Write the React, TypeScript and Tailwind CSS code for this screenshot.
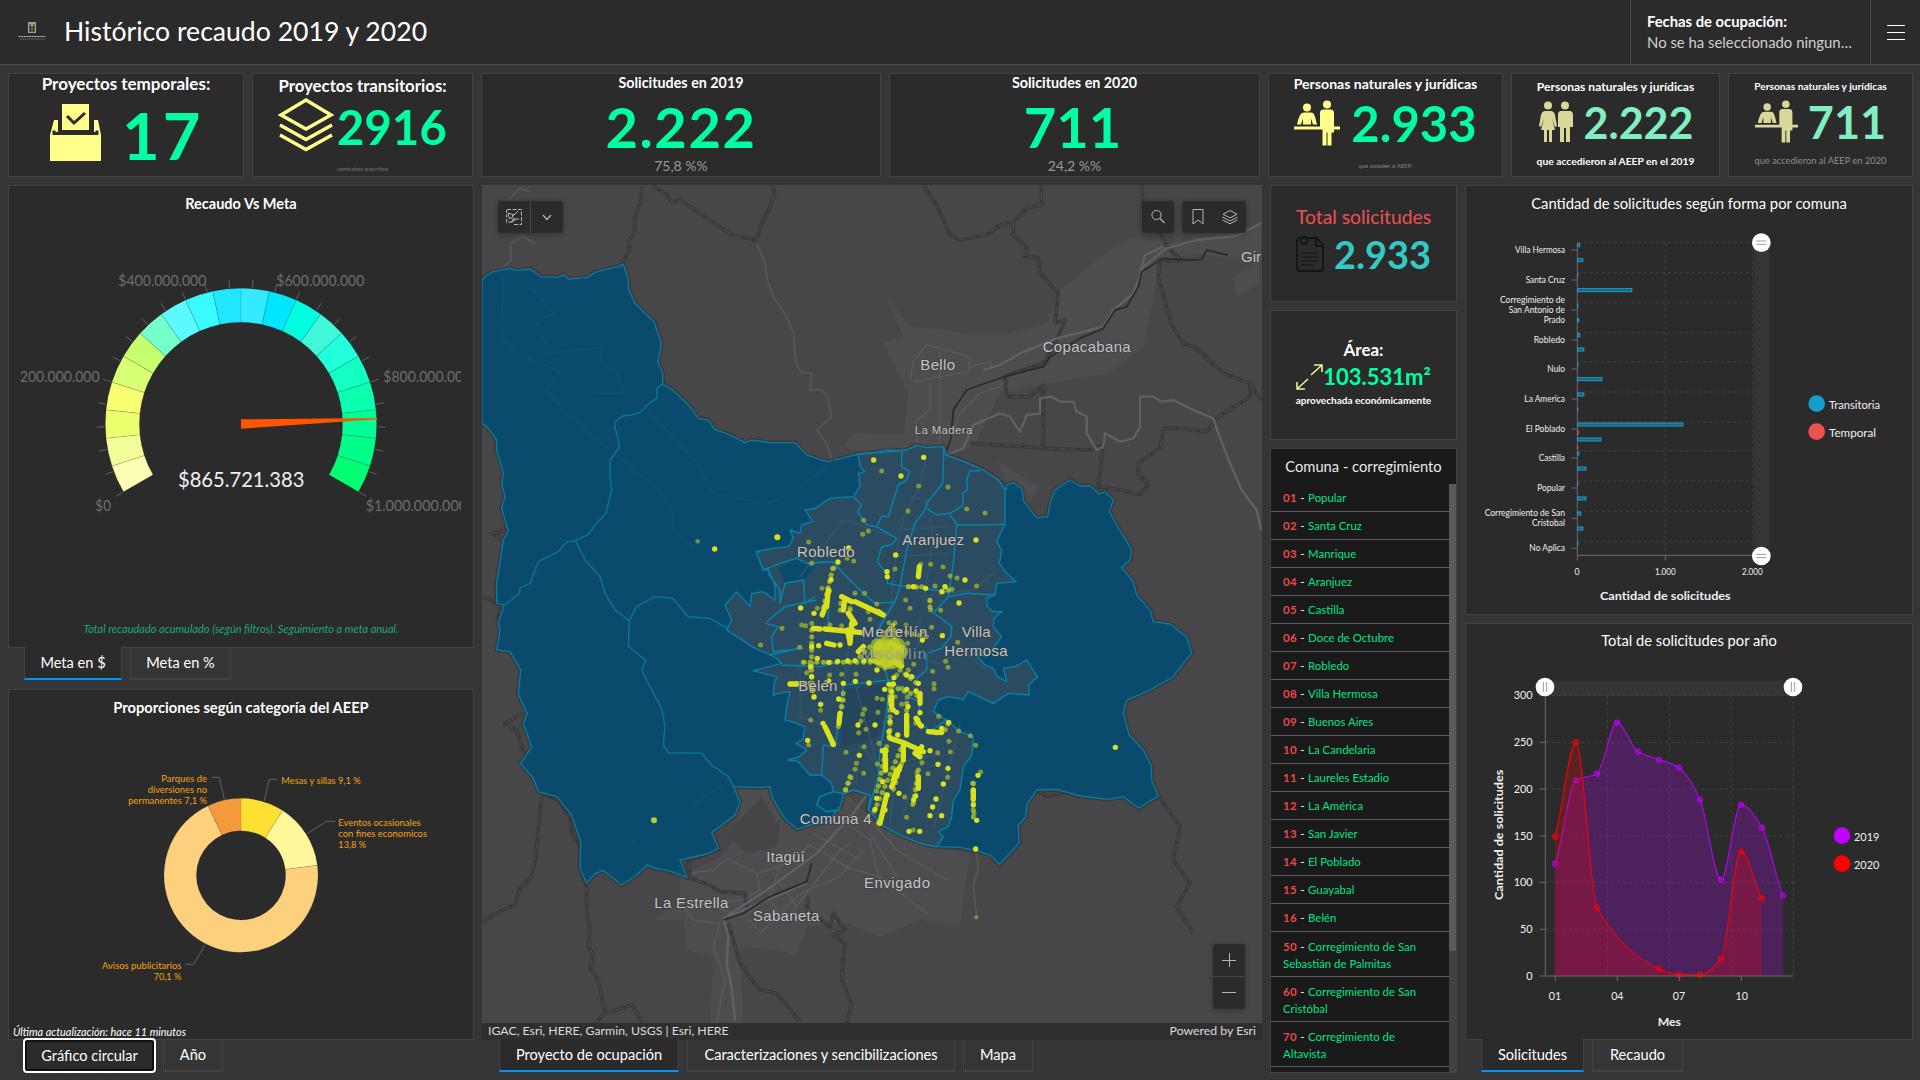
import React from "react";

const FONT = 'Lato, "Liberation Sans", sans-serif';

type TProps = {
  x: number;
  y: number;
  s: number;
  w?: number;
  a?: "start" | "middle" | "end";
  fill?: string;
  bold?: boolean;
  children: string;
};

function T({ x, y, s, w, a = "start", fill = "#f0f0f0", bold, children }: TProps) {
  return (
    <text
      x={x}
      y={y}
      fontSize={s}
      textAnchor={a}
      fill={fill}
      fontWeight={bold ? 700 : 400}
      textLength={w}
      lengthAdjust={w ? "spacingAndGlyphs" : undefined}
    >
      {children}
    </text>
  );
}

function Panel({ className = "", children }: { className?: string; children?: React.ReactNode }) {
  return (
    <section className={"shrink-0 overflow-hidden border border-[#424242] bg-[#2b2b2b] " + className}>{children}</section>
  );
}

function Tab({ label, width, active, focus }: { label: string; width: string; active?: boolean; focus?: boolean }) {
  const state = focus
    ? "z-10 -mt-[2px] h-[35px] rounded border-2 border-white bg-[#2b2b2b] shadow-[inset_0_0_0_2px_#101010]"
    : active
      ? "-mt-px h-[33px] border-x border-b-2 border-x-[#424242] border-b-[#0095ff] bg-[#2b2b2b]"
      : "h-8 border-x border-b-2 border-[#424242] bg-[#353535]";
  return (
    <button className={"relative flex shrink-0 items-center justify-center whitespace-nowrap text-[14.600px] text-white " + width + " " + state}>
      {label}
    </button>
  );
}

/* ---------- indicator icons ---------- */

function BallotIcon() {
  return (
    <svg className="h-[60px] w-[52px]" viewBox="0 0 52 60">
      <path fill="#ffff8a" d="M0 32l4-15h4v14h36V17h4l3 15v26H0z" />
      <path fill="none" stroke="#2b2b2b" strokeWidth="3" d="M4 27.500v3h43v-3" />
      <path fill="none" stroke="#2b2b2b" strokeWidth="1.500" d="M11 14v14M40 14v14" />
      <path fill="#ffff8a" d="M12 1h27v26H12z" />
      <path fill="none" stroke="#2b2b2b" strokeWidth="3" d="M17 13l7 7 11-10" />
    </svg>
  );
}

function LayersIcon() {
  return (
    <svg className="h-[54px] w-[56px]" viewBox="0 0 56 54" fill="none" stroke="#ffff8a" strokeWidth="3.400">
      <path d="M28 2l25 15-25 14L3 17z" />
      <path d="M2 27l26 14.500L54 27" />
      <path d="M2 37l26 14.500L54 37" />
    </svg>
  );
}

function DeskPeople({ fill, className }: { fill: string; className: string }) {
  return (
    <svg className={className} viewBox="0 0 46 46" fill={fill}>
      <circle cx="13" cy="7" r="4" />
      <circle cx="33" cy="4" r="4" />
      <path d="M10 12h7c3 0 4 3 6 12h-4l-2-6v6H9v-6l-2 6H3c2-9 4-12 7-12z" />
      <path d="M0 26h26V13c0-3 1-4 4-4h6c3 0 4 1 4 4v13h6v3h-6v3h-2.500v13h-4V32h-1v13h-4V29H0z" />
    </svg>
  );
}

function Couple({ fill }: { fill: string }) {
  return (
    <svg className="h-[42px] w-[35px]" viewBox="0 0 35 42" fill={fill}>
      <circle cx="10" cy="4.500" r="4" />
      <circle cx="27" cy="4.500" r="4" />
      <path d="M7 10h6c2 0 3 1 4 4l2 11-2 1-3-9 3 12h-3v12h-3V29h-2v12H6V29H3l3-12-3 9-2-1 2-11c1-3 2-4 4-4z" />
      <path d="M23 10h8c3 0 4 1 4 4v12h-3v15h-4V27h-2v14h-4V26h-2V14c0-3 1-4 3-4z" />
    </svg>
  );
}

/* ---------- gauge ---------- */

const gaugeColors = [
  "#fcffb3", "#f2ff99", "#ecff6e", "#f7ff73", "#d9ff75", "#c4ff6e", "#75ffcb", "#5cfaff", "#38faff", "#21e6ff",
  "#33eaff", "#00e6ff", "#00ffe1", "#40f7d8", "#21ffdc", "#14ffc4", "#0affaf", "#00ff95", "#00ff88", "#00ff73",
];

function polar(cx: number, cy: number, r: number, deg: number) {
  const t = (deg * Math.PI) / 180;
  return [cx + r * Math.cos(t), cy - r * Math.sin(t)];
}

function ring(cx: number, cy: number, R: number, r: number, from: number, to: number) {
  const [a, b] = polar(cx, cy, R, from);
  const [c, d] = polar(cx, cy, R, to);
  const [e, f] = polar(cx, cy, r, to);
  const [g, h] = polar(cx, cy, r, from);
  const large = Math.abs(from - to) > 180 ? 1 : 0;
  return `M${a} ${b}A${R} ${R} 0 ${large} 1 ${c} ${d}L${e} ${f}A${r} ${r} 0 ${large} 0 ${g} ${h}Z`;
}

function Gauge() {
  const cx = 723;
  const cy = 731;
  return (
    <svg className="mx-auto block h-[300px] w-[440px] shrink-0" viewBox="63 200 1320 900" fontFamily={FONT}>
      {gaugeColors.map((c, i) => (
        <path key={i} d={ring(cx, cy, 407, 305, 210 - i * 12, 198 - i * 12)} fill={c} stroke="#222" strokeOpacity=".18" strokeWidth="2" />
      ))}
      {Array.from({ length: 26 }, (_, i) => {
        const [a, b] = polar(cx, cy, 410, 210 - i * 9.6);
        const [c, d] = polar(cx, cy, 434, 210 - i * 9.6);
        return <path key={i} d={`M${a} ${b}L${c} ${d}`} stroke="#626262" strokeWidth="3" />;
      })}
      <path d="M723 717V745L1133 717V713Z" fill="#ff5500" />
      <T x={534} y={920} s={66} w={379}>$865.721.383</T>
      <T x={355} y={316} s={43} w={264} fill="#6e6e6e">$400.000.000</T>
      <T x={829} y={316} s={43} w={264} fill="#6e6e6e">$600.000.000</T>
      <T x={35} y={604} s={43} w={264} fill="#6e6e6e">$200.000.000</T>
      <T x={1150} y={604} s={43} w={264} fill="#6e6e6e">$800.000.000</T>
      <T x={286} y={992} s={43} w={47} fill="#6e6e6e">$0</T>
      <T x={1097} y={992} s={43} w={304} fill="#6e6e6e">$1.000.000.000</T>
    </svg>
  );
}

/* ---------- donut ---------- */

function Donut() {
  const slices = [
    { v: 9.1, c: "#fee035" },
    { v: 13.8, c: "#fff79a" },
    { v: 70.1, c: "#fdd07e" },
    { v: 7.0, c: "#f39a3f" },
  ];
  let acc = 0;
  const o = "#f5a30f";
  return (
    <svg className="block h-[240px] w-full shrink-0" viewBox="27 240 1392 720" fontFamily={FONT}>
      {slices.map((s) => {
        const from = 90 - acc * 3.6;
        acc += s.v;
        return <path key={s.c} d={ring(723, 586, 231, 134, from, 90 - acc * 3.6)} fill={s.c} stroke="#222" strokeOpacity=".15" strokeWidth="2" />;
      })}
      <g fill="none" stroke="#636363" strokeWidth="3">
        <path d="M634 292H658L673 358M832 298H808L793 362M1005 424H980L923 460M556 853H581L615 794" />
      </g>
      <T x={621} y={306} s={29} a="end" w={137} fill={o}>Parques de</T>
      <T x={621} y={339} s={29} a="end" w={178} fill={o}>diversiones no</T>
      <T x={621} y={372} s={29} a="end" w={236} fill={o}>permanentes 7,1 %</T>
      <T x={844} y={311} s={29} w={238} fill={o}>Mesas y sillas 9,1 %</T>
      <T x={1015} y={438} s={29} w={247} fill={o}>Eventos ocasionales</T>
      <T x={1015} y={471} s={29} w={266} fill={o}>con fines economicos</T>
      <T x={1015} y={504} s={29} w={83} fill={o}>13,8 %</T>
      <T x={544} y={867} s={29} a="end" w={238} fill={o}>Avisos publicitarios</T>
      <T x={544} y={900} s={29} a="end" w={83} fill={o}>70,1 %</T>
    </svg>
  );
}

/* ---------- bar chart ---------- */

const barTicks: { y: number; lines: string[]; w: number[] }[] = [
  { y: 209, lines: ["Villa Hermosa"], w: [150] },
  { y: 299, lines: ["Santa Cruz"], w: [118] },
  { y: 389, lines: ["Corregimiento de", "San Antonio de", "Prado"], w: [195, 169, 64] },
  { y: 479, lines: ["Robledo"], w: [94] },
  { y: 566, lines: ["Nulo"], w: [53] },
  { y: 656, lines: ["La America"], w: [122] },
  { y: 746, lines: ["El Poblado"], w: [118] },
  { y: 833, lines: ["Castilla"], w: [79] },
  { y: 923, lines: ["Popular"], w: [83] },
  { y: 1014, lines: ["Corregimiento de San", "Cristobal"], w: [241, 99] },
  { y: 1104, lines: ["No Aplica"], w: [107] },
];

const bars = [
  [195, 7], [240, 16], [286, 1], [330, 163], [377, 1], [420, 4], [465, 7], [508, 19], [553, 1], [597, 73], [643, 19],
  [688, 1], [733, 316], [778, 70], [820, 4], [865, 25], [910, 1], [955, 25], [1000, 10], [1045, 16], [1090, 1],
];

function BarChart() {
  return (
    <svg className="block h-[380px] w-full shrink-0" viewBox="18 140 1338 1140" fontFamily={FONT}>
      <rect x="882" y="187" width="47" height="940" fill="#353535" />
      <g stroke="#434343" strokeWidth="3" strokeDasharray="9 9">
        {[187, 277, 367, 457, 545, 635, 725, 812, 902, 993, 1083].map((y) => (
          <path key={y} d={`M353 ${y}H880`} />
        ))}
        <path d="M616 187V1125M878 187V1125" />
      </g>
      <path d="M352 187V1140M352 1125H880M616 1125V1140" stroke="#6a6a6a" strokeWidth="3" fill="none" />
      {barTicks.map((t) => (
        <g key={t.y}>
          <path d={`M334 ${t.y}H352`} stroke="#6a6a6a" strokeWidth="3" />
          {t.lines.map((l, i) => (
            <T key={l} x={315} y={t.y + 8 + (i - (t.lines.length - 1) / 2) * 30} s={26} a="end" w={t.w[i]}>{l}</T>
          ))}
        </g>
      ))}
      {bars.map(([y, w]) => (
        <rect key={y} x="352.500" y={y - 5} width={w} height="9" fill="#1d5f7c" stroke="#1c9fce" strokeWidth="3" />
      ))}
      <path d="M354 750V763M353 797V806" stroke="#f05050" strokeWidth="4" />
      <T x={351} y={1184} s={26} a="middle">0</T>
      <T x={616} y={1184} s={26} a="middle" w={62}>1.000</T>
      <T x={877} y={1184} s={26} a="middle" w={62}>2.000</T>
      <T x={616} y={1258} s={35} a="middle" w={392} bold>Cantidad de solicitudes</T>
      {[187, 1127].map((y) => (
        <g key={y}>
          <circle cx="904" cy={y} r="28" fill="#fff" />
          <path d={`M889 ${y - 5}H919M889 ${y + 5}H919`} stroke="#999" strokeWidth="3" />
        </g>
      ))}
      <circle cx="1070" cy="670" r="25" fill="#149ece" />
      <T x={1107} y={686} s={34} w={153}>Transitoria</T>
      <circle cx="1070" cy="754" r="25" fill="#ed5151" />
      <T x={1107} y={770} s={34} w={141}>Temporal</T>
    </svg>
  );
}

/* ---------- area chart ---------- */

type P = [number, number];
const s2019: P[] = [[285, 744], [348, 494], [411, 474], [471, 321], [534, 408], [597, 432], [657, 456], [720, 552], [783, 792], [843, 567], [906, 636], [969, 840]];
const s2020: P[] = [[285, 663], [348, 380], [411, 876], [597, 1059], [657, 1077], [720, 1077], [783, 1029], [843, 708], [906, 849]];

function monotone(p: P[]) {
  const n = p.length;
  const d = p.slice(1).map((q, i) => (q[1] - p[i][1]) / (q[0] - p[i][0]));
  const m = p.map((_, i) => {
    if (i === 0 || i === n - 1) return i === 0 ? d[0] * 0.7 : d[n - 2] * 0.7;
    if (d[i - 1] * d[i] <= 0) return 0;
    return (2 * d[i - 1] * d[i]) / (d[i - 1] + d[i]);
  });
  let out = `M${p[0][0]} ${p[0][1]}`;
  for (let i = 0; i < n - 1; i++) {
    const h = (p[i + 1][0] - p[i][0]) / 3;
    out += `C${p[i][0] + h} ${p[i][1] + m[i] * h} ${p[i + 1][0] - h} ${p[i + 1][1] - m[i + 1] * h} ${p[i + 1][0]} ${p[i + 1][1]}`;
  }
  return out;
}

function Series({ pts, color }: { pts: P[]; color: string }) {
  const line = monotone(pts);
  return (
    <g>
      <path d={`${line}V1081H285Z`} fill={color} fillOpacity=".23" />
      <path d={line} fill="none" stroke={color} strokeOpacity=".85" strokeWidth="3.500" />
      {pts.map((p) => (
        <circle key={p[0]} cx={p[0]} cy={p[1]} r="8" fill={color} fillOpacity=".4" stroke={color} strokeWidth="3" />
      ))}
    </g>
  );
}

function AreaChart() {
  return (
    <svg className="block h-[365px] w-full shrink-0" viewBox="18 160 1338 1095" fontFamily={FONT}>
      <rect x="255" y="195" width="745" height="45" fill="#353535" />
      <g stroke="#434343" strokeWidth="3" strokeDasharray="9 9">
        {[239, 380, 520, 661, 800, 941].map((y) => (
          <path key={y} d={`M256 ${y}H1000`} />
        ))}
        <path d="M442 239V1081M628 239V1081M814 239V1081M1000 239V1081" />
      </g>
      <Series pts={s2019} color="#bf00ff" />
      <Series pts={s2020} color="#ff0000" />
      <path d="M256 239V1081M238 1081H1000M238 239H256M238 380H256M238 520H256M238 661H256M238 800H256M238 941H256M286 1081V1096M472 1081V1096M658 1081V1096M844 1081V1096" stroke="#6a6a6a" strokeWidth="3" />
      {[["300", 239], ["250", 380], ["200", 520], ["150", 661], ["100", 800], ["50", 941], ["0", 1082]].map(([l, y]) => (
        <T key={l} x={218} y={Number(y) + 12} s={34} a="end" w={String(l).length * 19}>{String(l)}</T>
      ))}
      {[["01", 285], ["04", 472], ["07", 657], ["10", 845]].map(([l, x]) => (
        <T key={l} x={Number(x)} y={1152} s={34} a="middle" w={37}>{String(l)}</T>
      ))}
      <T x={628} y={1230} s={36} a="middle" w={70} bold>Mes</T>
      <g transform="rotate(-90 128 853)">
        <T x={128} y={853} s={35} w={391} bold>Cantidad de solicitudes</T>
      </g>
      {[255, 999].map((x) => (
        <g key={x}>
          <circle cx={x} cy="214" r="28" fill="#fff" />
          <path d={`M${x - 5} 199V229M${x + 5} 199V229`} stroke="#999" strokeWidth="3" />
        </g>
      ))}
      <circle cx="1146" cy="660" r="25" fill="#bf00ff" />
      <T x={1182} y={675} s={34} w={76}>2019</T>
      <circle cx="1146" cy="744" r="25" fill="#ff0000" />
      <T x={1182} y={759} s={34} w={76}>2020</T>
    </svg>
  );
}

/* ---------- map ---------- */

const municipality =
  "M6 302L20 285 40 275 90 265 110 272 150 267 165 277 180 290 235 292 252 284 265 297 320 293 345 277 390 265 415 260 430 252 445 300 445 327 465 370 495 400 522 425 542 485 542 510 533 545 548 580 548 612 575 628 600 650 630 680 655 715 685 720 705 748 750 765 795 788 815 780 870 788 945 788 980 825 1040 845 1085 835 1135 822 1200 815 1220 810 1275 812 1310 796 1335 803 1390 800 1398 825 1460 848 1515 873 1555 900 1577 930 1580 915 1600 908 1625 925 1632 965 1670 1013 1703 1010 1710 970 1725 930 1770 900 1800 918 1830 918 1858 942 1875 935 1900 960 1888 995 1910 1035 1935 1075 1955 1110 1950 1140 1925 1163 1960 1205 1970 1245 2010 1290 2020 1325 2070 1332 2120 1370 2135 1420 2110 1450 2079 1491 2010 1530 1940 1561 1930 1600 1947 1664 1990 1710 2013 1756 2015 1800 2035 1848 1976 1884 1930 1850 1884 1858 1800 1848 1730 1828 1670 1830 1640 1875 1638 1910 1615 1935 1617 1990 1558 2053 1530 2025 1490 2012 1440 2002 1370 2000 1320 1990 1260 1965 1210 1938 1165 1890 1170 1845 1120 1830 1090 1845 1080 1880 1045 1925 990 1935 950 1948 910 1910 875 1850 870 1820 840 1823 760 1820 780 1865 765 1905 695 1958 715 2005 680 2022 600 2040 620 2092 575 2075 530 2065 500 2055 470 2085 425 2115 400 2095 370 2072 345 2080 320 2110 300 2065 302 1985 275 1905 230 1850 175 1835 160 1795 122 1750 155 1700 130 1630 142 1600 115 1545 122 1470 90 1415 50 1410 60 1350 55 1330 72 1275 50 1270 50 1210 70 1080 85 1055 65 985 75 950 65 910 70 880 50 810 50 780 25 745 6 730Z";

const comunas =
  "M295 72L360 68 425 62 440 60 470 46 500 53 550 50 558 75 620 98 675 123 715 150 735 180 735 280 710 335 725 360 718 400 740 430 768 455 710 460 705 495 680 505 682 530 700 545 725 545 702 565 700 590 725 620 700 655 680 680 645 670 675 705 700 715 712 740 740 755 730 715 765 710 800 690 832 740 805 765 808 795 745 790 700 820 625 785 610 808 565 800 535 810 520 845 560 870 600 905 640 920 635 975 610 1010 600 1080 580 1110 575 1160 565 1190 535 1205 550 1220 530 1250 480 1240 420 1215 370 1188 325 1140 330 1095 280 1080 250 1090 220 1085 215 1060 185 1035 150 1035 115 995 85 990 118 980 140 960 108 940 128 930 135 890 95 875 75 870 82 820 90 785 65 788 40 795 42 765 50 740 -20 722 65 700 50 685 30 675 -25 650 -60 625 -100 600 -85 570 -105 525 -70 485 -30 530 -25 490 10 485 45 510 45 465 25 420 10 420 -12 365 40 355 85 350 100 325 90 300 120 310 125 285 158 275 135 240 165 235 210 205 280 200 300 170 295 130 315 125 300 110Z";

const inner = [
  "M425 62L425 110 448 125 440 150 415 165 385 260 365 258 350 290M280 200L305 225 293 245 320 285 350 290 410 325 395 345 365 350 352 395 380 430 382 460 412 466 560 485",
  "M552 50L548 160 500 220 495 240 465 280 440 360 420 470 405 515 360 590 345 640 375 715 388 765 380 850 360 960 355 1040 325 1140",
  "M500 235L530 255 570 250 610 225 608 190 622 180 620 150 630 122 660 122M570 255L592 285 660 285 735 283M590 285L580 400 565 500M565 500L520 548 575 590 573 620 545 655 505 668",
  "M0 365L-12 365M150 400L220 395 250 430 310 490 345 520 400 517M10 420L60 400 110 385 140 400 205 395M25 430L60 480 60 520 75 460 130 450 135 520 165 500M20 575L75 530 170 510M15 580L55 590 35 620 40 665 130 655",
  "M30 675L120 655 130 655M65 705L180 710 240 695 330 690M205 500V590M250 760L240 850 225 950 190 945 185 1035M250 765L390 750 455 805 480 815 475 870 510 905 560 870",
  "M565 500L620 490 705 495M220 1085L180 1100 170 1125 200 1145 240 1140M500 668L500 720 470 745 455 735M290 690L380 690 400 715",
];

const majorBoundary = [
  "M548 612L532 622 530 655 500 675 485 695 455 705 430 707 405 725 405 745 413 770 418 802 390 840 390 890 395 930 378 1000 350 1030 325 1063 285 1083 260 1085 235 1115 175 1145 150 1210 120 1225 118 1242 72 1275",
  "M287 1083L315 1140 360 1190 375 1240 405 1290 448 1322 445 1398 498 1443 485 1470 510 1520 545 1585 555 1640 550 1695 565 1718 665 1720 695 1755 745 1790 760 1820",
  "M448 1322L470 1280 525 1250 578 1255 625 1310 690 1315 750 1350M895 1170L900 1205 920 1220 1000 1185 985 1150 940 1145 895 1170",
];

const limits = [
  "M485 15L483 60 465 110 463 160 447 180 447 215 425 250",
  "M515 15L560 45 575 65 600 60 755 165 828 180 850 120 870 80 885 40 877 15",
  "M1330 15L1370 75 1390 120 1410 165 1440 180 1520 165 1560 135 1600 125 1640 85 1685 75 1683 15",
  "M1600 125L1600 165 1640 200 1635 230 1675 232 1680 280 1735 340 1725 430 1755 420 1735 470 1715 510 1690 550 1600 580 1575 590 1580 650 1650 650 1690 615 1690 800",
  "M1470 790L1700 805 1830 810 1870 795 1855 920 1925 930 1980 945 2005 915 1975 880 1975 850 2040 805 2050 745 2110 745 2180 755 2210 715 2310 650 2310 610 2230 580 2150 505 2110 490 2075 435 2035 290 2040 240 2110 245",
  "M1985 15L1990 80 2045 165 2065 205 2110 245M2310 610L2343 660",
  "M185 1850L165 2045 155 2090 120 2125 105 2175 35 2205 9 2230",
  "M185 1840L235 1860 270 1910 275 1960 300 1995 300 2060 320 2120 320 2200 330 2245 325 2300 340 2325 330 2365 355 2400 375 2500 345 2530M375 2500L455 2475 490 2530",
  "M715 2005L625 2045 630 2095 690 2115 720 2135 795 2140 800 2180M745 2230L780 2350 840 2430 890 2440 960 2525M985 2150L980 2190 1050 2240 1060 2200 1095 2250 1060 2265 1095 2290 1085 2400 1115 2470 1100 2530",
  "M130 1600L75 1630 110 1650 132 1720M85 1050L35 1060 75 1080M9 1250L65 1275 50 1320",
  "M1670 1830L1700 1850 1760 1835 1800 1850M2035 1848L2100 1940 2080 2040 2130 2110 2090 2180 2140 2260M2020 1320L1990 1290",
];

const roads = [
  "M85 60L120 25 150 35M90 190L130 170 165 190M90 190L95 240 65 265M830 190L855 250 865 310 880 350 920 410 940 460 948 550 965 578 995 580 990 630 1025 630 1043 650 1055 710 1010 750 1040 790 1055 840",
  "M1290 605L1300 545 1340 495 1470 530 1465 575 1300 605M1380 515L1380 800M1350 610L1350 690 1310 720 1310 800M1470 560L1530 545 1535 570",
  "M1400 810L1440 700 1500 640 1560 620 1580 590",
  "M620 2080L700 2070 740 2035 830 2080 840 2130 790 2160 610 2180 640 2220 720 2230M700 2180L790 2210 870 2150 900 2050M830 2080L900 2060 1000 1990M980 1990L1100 2060M1000 1960L1140 2040M1060 1900L1170 1980 1200 2110M940 2190L1080 2010 1110 1990M840 2260L960 2140 1080 2090 1150 2010M870 2160L910 2220M900 2110L950 2180M800 2210L840 2255M1090 2060L1200 2090 1340 2200M1170 1960L1250 2090M720 2230L700 2300 735 2400 710 2530M1180 1930L1250 2010 1400 2100",
  "M1487 2010L1495 2060 1480 2120 1490 2210",
];

const highway = [
  "M2343 130L2270 168 2150 180 2060 205 1990 260 1960 340 1900 390 1870 440 1730 475 1620 520 1560 555 1510 570",
  "M2050 200L1995 225 1980 280",
  "M1398 825L1450 805 1480 735 1560 700 1590 710 1620 755 1640 705 1680 700 1680 655 1715 650 1740 665 1780 665 1790 695 1820 710 1820 760 1850 810 1870 800 1875 760 1920 785 1960 775 1980 740 1980 650 2020 650 2045 665 2080 660 2140 690 2200 715 2215 760 2250 850 2285 930 2330 990 2343 1050",
  "M730 2215L860 2130 1010 2020 1120 1900 1170 1830M730 2215L745 2270 740 2350 755 2420 765 2520M745 2210L980 2110",
];

const rail = [
  "M2245 225L2180 210 2165 238 2115 240 2050 235 1985 275 1975 320 1940 380 1905 390 1870 445 1800 475 1710 530 1690 560 1590 585 1500 615 1460 630 1420 690 1412 780 1400 810",
  "M730 2220L790 2200 870 2150 980 2105 995 2050",
];

/* dense corridors of permits: round-capped strokes */
const corridors = [
  "M245 500L275 515M255 505L250 540M285 515L370 555M265 550L285 580M275 580L270 640M160 595L180 597M195 597L305 608M200 640L222 645M295 665L310 650M395 690L425 708M355 545L365 552",
  "M390 925L435 940 490 965M465 970L480 980M485 950L475 975M395 800V830M430 940V990M420 1010L395 1070M380 1095L360 1180M505 905L545 908M478 410L475 440M197 525L187 555M195 890L220 943M240 850L237 880M375 960L377 1020M475 1040V1075M640 1080V1105M480 790V820M440 855V910M468 865L480 885M90 762H110M410 1020L400 1050M205 480L200 530M262 600L270 635",
];

const bright: P[] = [
  [341, 90], [423, 138], [491, 82], [648, 330], [407, 375], [597, 519], [266, 354], [234, 396], [213, 449], [207, 483], [122, 534], [162, 550], [170, 595], [547, 617],
  [155, 650], [176, 647], [240, 645], [172, 685], [152, 710], [206, 697], [233, 694], [263, 693], [285, 692], [312, 692], [351, 720], [206, 753], [250, 760], [286, 754], [327, 759], [155, 740], [158, 780], [162, 801], [182, 823],
  [236, 807], [189, 880], [220, 943], [143, 931], [298, 976], [402, 743], [440, 735], [455, 740], [475, 760], [468, 783], [440, 778], [387, 763], [395, 785], [391, 810], [400, 840], [390, 875], [387, 905], [388, 920], [413, 915], [440, 915],
  [410, 847], [480, 848], [473, 870], [484, 888], [512, 905], [530, 908], [545, 895], [566, 877], [510, 962], [534, 1003], [564, 1015], [550, 1062], [528, 1107], [518, 1131], [510, 1157], [545, 1157], [447, 1204], [479, 1204], [417, 1090],
  [461, 1110], [467, 1098], [367, 962], [378, 962], [377, 990], [376, 1020], [368, 1055], [350, 1105], [345, 1138], [382, 1095], [357, 1178], [375, 1140], [654, 1036], [640, 1085], [640, 1108], [640, 1125], [650, 1171], [647, 1257],
  [294, 885], [345, 885], [382, 440], [381, 425], [460, 470], [487, 630], [444, 830], [440, 890], [400, 762], [615, 450], [374, 778], [497, 475], [546, 485], [555, 470],
];

const faded: P[] = [
  [365, 123], [476, 168], [564, 171], [620, 237], [675, 249], [444, 243], [311, 271], [325, 303], [308, 313], [146, 336], [155, 400], [261, 385], [281, 393], [405, 417], [482, 403], [512, 403], [549, 411], [570, 438], [591, 444], [650, 468], [576, 478],
  [445, 470], [470, 472], [525, 468], [437, 510], [450, 535], [509, 513], [512, 540], [542, 541], [285, 490], [314, 490], [350, 522], [186, 475], [222, 415], [172, 535], [66, 595], [125, 585], [137, 587], [155, 580], [210, 585], [245, 587],
  [405, 578], [387, 578], [438, 585], [515, 592], [488, 605], [593, 637], [557, 694], [564, 712], [518, 724], [522, 761], [522, 776], [461, 703], [443, 640], [445, 720], [410, 735], [288, 733], [245, 733], [209, 735], [140, 728], [119, 652], [133, 697],
  [2, 645], [182, 841], [152, 870], [314, 838], [308, 853], [303, 873], [296, 908], [318, 898], [354, 847], [351, 805], [367, 808], [250, 810], [246, 830], [312, 950], [357, 940], [258, 967], [289, 1000], [285, 1018], [273, 1043], [265, 1060], [256, 1080],
  [311, 1030], [352, 1002], [350, 1083], [533, 968], [571, 965], [567, 934], [596, 903], [631, 917], [647, 946], [536, 859], [486, 998], [504, 1031], [471, 1028], [563, 1042], [440, 1162], [434, 1101], [458, 1124], [662, 1026], [638, 1060], [642, 1150],
  [405, 800], [425, 823], [442, 802], [425, 775], [375, 715], [146, 945], [467, 880], [460, 1200], [270, 535], [330, 568], [325, 545],
];

const labels: { t: string; x: number; y: number; w: number; s?: number; o?: number }[] = [
  { t: "Bello", x: 1321, y: 570, w: 104 },
  { t: "Copacabana", x: 1688, y: 516, w: 264 },
  { t: "La Madera", x: 1304, y: 762, w: 173, s: 34 },
  { t: "Gir", x: 2283, y: 246, w: 60 },
  { t: "Aranjuez", x: 1267, y: 1096, w: 185 },
  { t: "Robledo", x: 951, y: 1132, w: 173 },
  { t: "Medellín", x: 1145, y: 1371, w: 197 },
  { t: "Medellin", x: 1143, y: 1438, w: 195, o: 0.6 },
  { t: "Villa", x: 1445, y: 1370, w: 87 },
  { t: "Hermosa", x: 1393, y: 1428, w: 190 },
  { t: "Belén", x: 955, y: 1532, w: 117 },
  { t: "Comuna 4", x: 959, y: 1931, w: 216 },
  { t: "Itagüí", x: 859, y: 2045, w: 115 },
  { t: "Envigado", x: 1152, y: 2123, w: 198 },
  { t: "La Estrella", x: 523, y: 2183, w: 222 },
  { t: "Sabaneta", x: 819, y: 2222, w: 199 },
];

function MapView() {
  return (
    <svg className="block h-[855px] w-[780px]" viewBox="6 15 2340 2565" fontFamily='"Liberation Sans", sans-serif'>
      <rect x="0" y="0" width="2400" height="2600" fill="#474749" />
      <g fill="#4d4d4f">
        <path d="M1220 350L1290 440 1400 450 1480 465 1570 465 1700 430 1740 330 1850 240 1950 170 2060 190 2240 160 2343 130V250L2150 220 2040 240 2020 360 1990 500 1890 580 1700 610 1560 640 1480 800 1398 825 1170 820 1090 800 1120 760 1270 765 1285 640 1210 490 1270 470Z" />
        <path d="M760 1830L870 1825 880 1870 950 1948 1045 1925 1100 1840 1200 1940 1370 2000 1470 2020 1440 2240 1320 2220 1200 2270 1100 2230 980 2240 950 2330 900 2310 780 2300 790 2530 690 2530 700 2330 620 2310 610 2220 520 2220 600 2170 600 2090 720 2030 780 1960Z" />
        <path d="M1550 840L1680 920 1640 980 1580 910ZM2260 290L2340 240V310L2270 350Z" />
      </g>
      <path d="M845 1850L900 1940 890 2000 800 2020 740 1960Z" fill="#454546" />
      <g fill="none" strokeLinejoin="round">
        {roads.map((d) => <path key={d} d={d} stroke="#5a5a5c" strokeWidth="4" />)}
        {limits.map((d) => <path key={d} d={d} stroke="#39393a" strokeWidth="11" />)}
        {limits.map((d) => <path key={d} d={d} stroke="#48484a" strokeWidth="4" strokeDasharray="24 9" />)}
        {highway.map((d) => <path key={d} d={d} stroke="#616163" strokeWidth="7" />)}
        {rail.map((d) => <path key={d} d={d} stroke="#2c2c2d" strokeWidth="5.500" />)}
      </g>
      <path d={municipality} fill="none" stroke="#333334" strokeWidth="14" strokeOpacity=".6" />
      <path d={municipality} fill="#0a4b6d" stroke="#0a7ba1" strokeWidth="4" />
      <g fill="none" stroke="#124f70" strokeWidth="4">
        <path d="M70 290L65 480 130 530 240 575 200 630 260 700 400 820 540 930 580 1000 580 1050 640 1100M150 320L220 400 170 430 210 520 370 500 360 540 410 580 430 640 340 640M500 690L570 760 650 850 700 940 860 970 940 940 1060 840M400 1960L430 1950 470 2000M640 1870L740 1810" />
      </g>
      <g fill="none" stroke="#0a7399" strokeWidth="4.500" strokeLinejoin="round">
        {majorBoundary.map((d) => <path key={d} d={d} />)}
      </g>
      <g transform="translate(840 750)">
        <path d={comunas} fill="#2a4b60" stroke="#0782ab" strokeWidth="4" strokeLinejoin="round" />
        <path d="M55 415L110 385 170 410 130 450 75 455Z" fill="#0a4b6d" />
        <path d="M255 780L380 760 365 900 340 930 240 950Z" fill="#24455b" />
        <g fill="none" stroke="#36566a" strokeWidth="4">
          <path d="M500 70L480 170 430 260 400 420 395 520 350 600M450 200L500 210 520 320 490 520M410 300L560 290M400 380L570 370M120 700V860L180 880M270 620L250 780M310 590V700M480 560L470 680 540 700 600 660 680 720M300 940L290 1060M310 950L400 1090 390 1180M400 1000L500 980 590 970M430 1150L500 960M120 440L250 270 400 320M280 740L350 1000M480 500L640 480 700 430M600 880L520 1200" />
        </g>
        <g fill="none" stroke="#0782ab" strokeWidth="4.500" strokeLinejoin="round">
          {inner.map((d) => <path key={d} d={d} />)}
        </g>
        <g fill="#a5b82b" fillOpacity=".72">
          {faded.map(([x, y]) => <circle key={`${x}-${y}`} cx={x} cy={y} r="7.500" />)}
        </g>
        <g fill="none" stroke="#b8c826" strokeOpacity=".75" strokeWidth="15" strokeLinecap="round" strokeDasharray="1 19">
          <path d="M218 415L185 555M155 600V800M130 697H340M90 762H170M110 760H160M250 790L235 890M150 700L162 800M390 780V920M430 940L340 1150M270 1040L255 1085M395 770L480 800M420 720L470 760M440 820V920M475 1020L460 1120M640 1060V1170M545 485L575 478M445 470H500" />
          <path d="M245 500L240 545M270 540L280 600M300 680L340 640M400 600L500 620M510 510V550M555 900L565 880M380 950L355 1070M425 1000L400 1080" />
        </g>
        <g fill="none" stroke="#d8e21a" strokeWidth="16" strokeLinecap="round" strokeLinejoin="round">
          {corridors.map((d) => <path key={d} d={d} />)}
        </g>
        <g fill="#c6d424" fillOpacity=".62">
          <circle cx="385" cy="664" r="46" />
          <circle cx="375" cy="672" r="44" />
          <circle cx="392" cy="676" r="42" />
          <circle cx="410" cy="648" r="26" />
          <circle cx="425" cy="664" r="20" />
          <circle cx="352" cy="645" r="20" />
          <circle cx="400" cy="612" r="12" />
          <circle cx="372" cy="612" r="12" />
          <circle cx="418" cy="700" r="15" />
        </g>
        <g fill="#d8e21a">
          {bright.map(([x, y]) => <circle key={`${x}-${y}`} cx={x} cy={y} r="8" />)}
        </g>
        <circle cx="-318" cy="1171" r="9" fill="#b9cc2c" />
        <path d="M400 585L380 605M330 690L360 700" stroke="#c5d323" strokeWidth="12" strokeLinecap="round" />
      </g>
      <circle cx="653" cy="1084" r="7" fill="#67915a" />
      <circle cx="892" cy="1072" r="9" fill="#d8e21a" />
      <circle cx="704" cy="1107" r="8" fill="#d8e21a" />
      <circle cx="1906" cy="1702" r="8" fill="#d8e21a" />
      <circle cx="1489" cy="2212" r="6" fill="#889238" />
      {labels.map((l) => (
        <text
          key={l.t}
          x={l.x}
          y={l.y}
          fontSize={l.s ?? 45}
          textLength={l.w}
          fill="#c4c4c4"
          fillOpacity={l.o ?? 1}
          stroke="#3b3b3c"
          strokeOpacity={l.o ? 0.2 : 0.7}
          strokeWidth="5"
          paintOrder="stroke"
        >
          {l.t}
        </text>
      ))}
    </svg>
  );
}

const tool = "absolute top-[16px] flex h-8 overflow-hidden rounded-[3px] bg-[#2b2b2b] shadow-[0_1px_6px_rgba(0,0,0,0.3)]";
const cell = "flex w-8 items-center justify-center";

function MapTools() {
  return (
    <>
      <div className={tool + " left-4"}>
        <span className="flex w-[33px] items-center justify-center border-r border-[#454545]">
          <svg width="16" height="16" viewBox="0 0 16 16" fill="none" stroke="#b5b5b5">
            <path d="M1 .5H15.500V15.500H8" strokeDasharray="4 1.500" />
            <path d="M.5 1V15" strokeDasharray="3 1.500" />
            <path d="M2 4l6 2-2 1 3 4-1.500 1L5 8.500 3.500 10zM8 6l4-4M9 10h4M5 13l4-3M2 13h5" />
          </svg>
        </span>
        <span className={cell}>
          <svg width="12" height="12" viewBox="0 0 12 12" fill="none" stroke="#b5b5b5" strokeWidth="1.200">
            <path d="M2 4l4 4.500L10 4" />
          </svg>
        </span>
      </div>
      <div className={tool + " left-[660px]"}>
        <span className={cell}>
          <svg width="16" height="16" viewBox="0 0 16 16" fill="none" stroke="#b5b5b5">
            <circle cx="6.500" cy="6" r="4.600" />
            <path d="M10 9.500l4.500 4.500" strokeWidth="1.300" />
          </svg>
        </span>
      </div>
      <div className={tool + " left-[700px]"}>
        <span className={cell}>
          <svg width="16" height="18" viewBox="0 0 16 18" fill="none" stroke="#b5b5b5">
            <path d="M3 1.500h10v14.500l-5-4-5 4z" />
          </svg>
        </span>
        <span className={cell}>
          <svg width="18" height="18" viewBox="0 0 18 18" fill="none" stroke="#b5b5b5">
            <path d="M9 2.500l7 3.700-7 3.700-7-3.700zM1.500 9L9 13l7.500-4M1.500 11.800l7.500 4 7.500-4" />
          </svg>
        </span>
      </div>
      <div className="absolute left-[731px] top-[759px] flex w-8 flex-col rounded-[3px] bg-[#2b2b2b] text-[#b5b5b5] shadow-[0_1px_6px_rgba(0,0,0,0.3)]">
        <span className="flex h-[33px] items-center justify-center border-b border-[#454545]">
          <svg width="16" height="16" viewBox="0 0 16 16" stroke="currentColor"><path d="M1 8.500H15M8.500 1V15" /></svg>
        </span>
        <span className="flex h-8 items-center justify-center">
          <svg width="16" height="16" viewBox="0 0 16 16" stroke="currentColor"><path d="M1 7.500H15" /></svg>
        </span>
      </div>
      <div className="absolute inset-x-0 bottom-0 flex h-[17px] items-start justify-between bg-[#2b2b2b]/85 px-[6px] text-[12.300px] leading-[15px] text-[#dcdcdc]">
        <span>IGAC, Esri, HERE, Garmin, USGS | Esri, HERE</span>
        <span>Powered by Esri</span>
      </div>
    </>
  );
}

/* ---------- list ---------- */

const comunaList: [string, string][] = [
  ["01", "Popular"], ["02", "Santa Cruz"], ["03", "Manrique"], ["04", "Aranjuez"], ["05", "Castilla"], ["06", "Doce de Octubre"],
  ["07", "Robledo"], ["08", "Villa Hermosa"], ["09", "Buenos Aires"], ["10", "La Candelaria"], ["11", "Laureles Estadio"],
  ["12", "La América"], ["13", "San Javier"], ["14", "El Poblado"], ["15", "Guayabal"], ["16", "Belén"],
  ["50", "Corregimiento de San Sebastián de Palmitas"], ["60", "Corregimiento de San Cristóbal"], ["70", "Corregimiento de Altavista"],
];

function ComunaList() {
  return (
    <div className="flex h-[588px] bg-[#1a1a1a]">
      <ul className="w-[178px] overflow-hidden">
        {comunaList.map(([n, name]) => (
          <li
            key={n}
            className={
              "border-b border-[#5c5c5c] pl-3 pr-4 text-[11.400px] text-[#00e38c] " +
              (name.length > 20 ? "h-[45px] pt-[6px] leading-[17px]" : "h-[28px] leading-[28px]")
            }
          >
            <span className="font-bold tracking-[0.3px] text-[#e84a4a]">{n}</span>
            <span className="tracking-[0.4px] text-white"> - </span>
            {name}
          </li>
        ))}
      </ul>
      <div className="ml-auto w-[7px] bg-[#424242]">
        <div className="h-[467px] bg-[#5a5a5a]" />
      </div>
    </div>
  );
}

const num = "font-bold leading-none";

export default function App() {
  return (
    <div className="flex h-[1080px] w-[1920px] flex-col overflow-hidden bg-[#353535] text-white" style={{ fontFamily: FONT }}>
      <header className="flex h-[65px] shrink-0 items-stretch border-b border-[#4a4a4a] bg-[#2b2b2b]">
        <div className="flex w-16 items-center pl-[18px]">
          <svg className="h-5 w-7" viewBox="0 0 28 20">
            <path fill="#8fa3ad" d="M10 0h8v11h-8z" />
            <path fill="#2a2a26" d="M11.500 2h5v8h-5z" />
            <path fill="#b79a4a" d="M12.500 1h3v3h-1v6h-1V4h-1z" />
            <path stroke="#b9c3c9" strokeDasharray="2 .6" d="M.5 14.500h27" />
            <path stroke="#707a80" strokeDasharray="1.500 .8" d="M2 17h25" />
          </svg>
        </div>
        <h1 className="flex flex-1 items-center text-[26.600px]">Histórico recaudo 2019 y 2020</h1>
        <div className="flex w-[241px] flex-col border-x border-[#4a4a4a] pl-4 pt-[11px]">
          <span className="text-[14.800px] font-bold leading-5">Fechas de ocupación:</span>
          <span className="whitespace-nowrap text-[14.900px] leading-[22px] text-[#d0d0d0]">No se ha seleccionado ningun…</span>
        </div>
        <div className="flex w-[49px] flex-col items-center justify-center gap-[6px] pl-px">
          <i className="h-px w-[18px] bg-white" />
          <i className="h-px w-[18px] bg-white" />
          <i className="h-px w-[18px] bg-white" />
        </div>
      </header>

      <div className="flex shrink-0 gap-2 px-2 pt-2">
        <Panel className="flex h-[104px] w-[236px] flex-col items-center">
          <h2 className="text-[17px] font-bold leading-5">Proyectos temporales:</h2>
          <div className="flex h-[75px] w-full items-start gap-[20px] pl-[41px] pt-[9px]">
            <BallotIcon />
            <span className={num + " text-[65px] tracking-[3px] text-[#00ffa2]"}>17</span>
          </div>
        </Panel>
        <Panel className="flex h-[104px] w-[221px] flex-col items-center pt-[2px]">
          <h2 className="text-[16.800px] font-bold leading-5">Proyectos transitorios:</h2>
          <div className="flex items-center gap-[3px] pt-[2px]">
            <LayersIcon />
            <span className={num + " pt-1 text-[47px] tracking-[0.3px] text-[#00ffa2]"}>2916</span>
          </div>
          <span className="mt-[14px] text-[6.200px] leading-none text-[#757575]">contratos suscritos</span>
        </Panel>
        <Panel className="flex h-[104px] w-[400px] flex-col items-center">
          <h2 className="text-[14.300px] font-bold leading-[18px]">Solicitudes en 2019</h2>
          <span className={num + " mt-[7px] text-[56px] tracking-[1.600px] text-[#00ffa2]"}>2.222</span>
          <span className="mt-[2px] text-[14px] leading-[18px] text-[#999]">75,8 %%</span>
        </Panel>
        <Panel className="flex h-[104px] w-[371px] flex-col items-center">
          <h2 className="text-[14.300px] font-bold leading-[18px]">Solicitudes en 2020</h2>
          <span className={num + " mt-[7px] -ml-1 text-[56px] text-[#00ffa2]"}>711</span>
          <span className="mt-[2px] text-[14px] leading-[18px] text-[#999]">24,2 %%</span>
        </Panel>
        <Panel className="flex h-[104px] w-[235px] flex-col items-center">
          <h2 className="text-[14.100px] font-bold leading-5">Personas naturales y jurídicas</h2>
          <div className="flex items-center gap-[11px] pt-[5px]">
            <DeskPeople fill="#ffff8a" className="h-[47px] w-[46px]" />
            <span className={num + " text-[49px] text-[#00ffa2]"}>2.933</span>
          </div>
          <span className="mt-[15px] text-[5.700px] leading-none text-[#858585]">que acceden al AEEP:</span>
        </Panel>
        <Panel className="flex h-[104px] w-[209px] flex-col items-center pt-[3px]">
          <h2 className="text-[12.100px] font-bold leading-5">Personas naturales y jurídicas</h2>
          <div className="flex h-[50px] items-center gap-[11px]">
            <Couple fill="#d9d89a" />
            <span className={num + " text-[43px] text-[#82efc0]"}>2.222</span>
          </div>
          <span className="mt-[6px] text-[10.300px] font-bold leading-4">que accedieron al AEEP en el 2019</span>
        </Panel>
        <Panel className="flex h-[104px] w-[185px] flex-col items-center pt-[2px]">
          <h2 className="text-[10.200px] font-bold leading-5">Personas naturales y jurídicas</h2>
          <div className="flex h-[50px] items-center gap-[10px] pt-[2px]">
            <DeskPeople fill="#d9d89a" className="h-[44px] w-[43px]" />
            <span className={num + " text-[45px] text-[#82efc0]"}>711</span>
          </div>
          <span className="mt-[7px] text-[9.300px] leading-4 text-[#8f8f8f]">que accedieron al AEEP en 2020</span>
        </Panel>
      </div>

      <main className="flex gap-2 pl-2 pt-2">
        <div className="flex w-[466px] shrink-0 flex-col">
          <Panel className="flex h-[463px] flex-col items-center">
            <h2 className="h-[61px] pt-[8px] text-[14.500px] font-bold leading-5">Recaudo Vs Meta</h2>
            <Gauge />
            <p className="mt-auto pb-2 text-[11px] italic leading-5 text-[#1fa67c]">
              Total recaudado acumulado (según filtros). Seguimiento a meta anual.
            </p>
          </Panel>
          <div className="flex gap-2 pl-4">
            <Tab label="Meta en $" width="w-[98px]" active />
            <Tab label="Meta en %" width="w-[101px]" />
          </div>
          <Panel className="mt-[9px] flex h-[351px] flex-col">
            <h2 className="h-[70px] pt-[7px] text-center text-[14.700px] font-bold leading-5">Proporciones según categoría del AEEP</h2>
            <Donut />
            <p className="mt-auto pl-[4px] text-[10.900px] italic leading-[15px]">Última actualización: hace 11 minutos</p>
          </Panel>
          <div className="flex gap-[7px] pl-[15px]">
            <Tab label="Gráfico circular" width="w-[133px]" focus />
            <Tab label="Año" width="w-[60px]" />
          </div>
        </div>

        <div className="flex w-[780px] shrink-0 flex-col">
          <div className="relative h-[855px] shrink-0 overflow-hidden">
            <MapView />
            <MapTools />
          </div>
          <div className="flex gap-2 pl-[17px]">
            <Tab label="Proyecto de ocupación" width="w-[180px]" active />
            <Tab label="Caracterizaciones y sencibilizaciones" width="w-[268px]" />
            <Tab label="Mapa" width="w-[70px]" />
          </div>
        </div>

        <div className="flex w-[187px] shrink-0 flex-col gap-2">
          <Panel className="flex h-[117px] flex-col items-center pt-[19px]">
            <h2 className="text-[19.300px] leading-6 text-[#f05050]">Total solicitudes</h2>
            <div className="flex items-center gap-[10px] pt-[6px]">
              <svg className="h-9 w-7" viewBox="0 0 28 36" fill="none" stroke="#151515" strokeWidth="1.800">
                <path d="M5 2h16l6 7v24a2 2 0 01-2 2H4a3 3 0 01-3-3V5a3 3 0 013-3zM20 2v8h7" />
                <circle cx="8" cy="4.500" r="3.500" />
                <path d="M5 17h18M5 21h18M5 25h18M5 29h12" strokeWidth="1.200" />
              </svg>
              <span className={num + " text-[38px] text-[#35c9c3]"}>2.933</span>
            </div>
          </Panel>
          <Panel className="flex h-[130px] flex-col items-center pt-[27px]">
            <h2 className="text-[17px] font-bold leading-6">Área:</h2>
            <div className="flex h-7 items-center pt-px">
              <svg className="h-[26px] w-[27px]" viewBox="0 0 27 26" fill="none" stroke="#f2ef9a" strokeWidth="1.600">
                <path d="M15 11L26 1M18 1h8v7M12 15L1 25M1 18v7h8" />
              </svg>
              <span className={num + " text-[22px] text-[#00ffa2]"}>103.531m²</span>
            </div>
            <span className="text-[10px] font-bold leading-5">aprovechada económicamente</span>
          </Panel>
          <Panel className="h-[625px]">
            <h2 className="h-[35px] bg-[#1a1a1a] text-center text-[14.700px] leading-[34px] text-[#e8e8e8]">Comuna - corregimiento</h2>
            <ComunaList />
          </Panel>
        </div>

        <div className="flex w-[448px] shrink-0 flex-col">
          <Panel className="h-[430px]">
            <h2 className="h-[41px] pt-[7px] text-center text-[14.800px] leading-5">Cantidad de solicitudes según forma por comuna</h2>
            <BarChart />
          </Panel>
          <Panel className="mt-2 h-[417px]">
            <h2 className="h-[45px] pt-[6px] text-center text-[14.700px] leading-5">Total de solicitudes por año</h2>
            <AreaChart />
          </Panel>
          <div className="flex gap-2 pl-4">
            <Tab label="Solicitudes" width="w-[103px]" active />
            <Tab label="Recaudo" width="w-[91px]" />
          </div>
        </div>
      </main>
    </div>
  );
}
